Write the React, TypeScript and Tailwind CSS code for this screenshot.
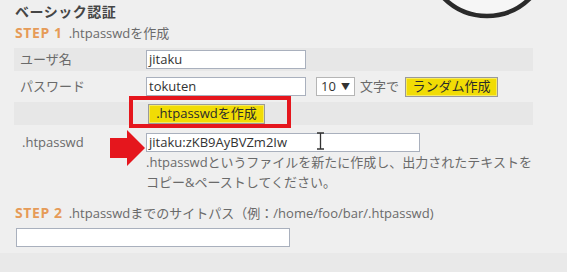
import React from 'react';

const font = { fontFamily: '"Open Sans", "Noto Sans CJK JP", sans-serif' };

const Field: React.FC<{ value?: string; className?: string }> = ({ value, className }) => (
  <div
    className={`h-[19px] bg-white border border-[#a9b0bd] px-[2px] text-[13px] leading-[17px] text-[#333] whitespace-nowrap overflow-hidden ${className ?? ''}`}
  >
    {value}
  </div>
);

const YellowButton: React.FC<{ label: string; className?: string }> = ({ label, className }) => (
  <div
    className={`h-[20px] flex items-center justify-center bg-[#f1dc05] border border-[#9a9a9a] shadow-[inset_0_0_0_1px_#f7ea60] text-[13px] text-[#2b2b2b] leading-none whitespace-nowrap ${className ?? ''}`}
  >
    {label}
  </div>
);

export default function App() {
  return (
    <div className="relative w-[567px] h-[272px] overflow-hidden bg-[#efefef] text-[#6a6a6a]" style={font}>
      <div className="flex flex-col h-full">
        <div className="mt-[3px] pl-[15px] text-[14px] leading-[18px] font-bold text-[#454545] tracking-[0.5px]">ベーシック認証</div>

        <div className="mt-[3px] pl-[15px] text-[13px] leading-[18px] flex gap-[6px]">
          <span className="font-bold text-[14px] tracking-[0.6px] text-[#e69b58]">STEP 1</span>
          <span>.htpasswdを作成</span>
        </div>

        <div className="mt-[6px] ml-[14px] w-[519px] flex flex-col gap-[4px]">
          <div className="h-[23px] flex items-center bg-[#e7e7e7]">
            <div className="w-[132px] pl-[6px] text-[13px]">ユーザ名</div>
            <Field value="jitaku" className="w-[160px]" />
          </div>

          <div className="h-[23px] flex items-center">
            <div className="w-[132px] pl-[6px] text-[13px]">パスワード</div>
            <Field value="tokuten" className="w-[160px]" />
            <div className="ml-[10px] w-[39px] h-[19px] bg-white border border-[#b5b5b5] flex items-center justify-between px-[4px] text-[13px] text-[#333]">
              <span>10</span>
              <span className="text-[9px]">▼</span>
            </div>
            <span className="ml-[5px] text-[13px]">文字で</span>
            <YellowButton label="ランダム作成" className="ml-[6px] w-[93px]" />
          </div>

          <div className="h-[23px] flex items-center bg-[#e7e7e7]">
            <div className="w-[134px]" />
            <YellowButton label=".htpasswdを作成" className="w-[117px]" />
          </div>

          <div className="flex">
            <div className="w-[132px] pl-[8px] pt-[4px] text-[13px] leading-[19px]">.htpasswd</div>
            <div className="pt-[4px]">
              <Field value="jitaku:zKB9AyBVZm2Iw" className="w-[274px]" />
              <div className="text-[13px] leading-[20px]">
                <div>.htpasswdというファイルを新たに作成し、出力されたテキストを</div>
                <div>コピー&amp;ペーストしてください。</div>
              </div>
            </div>
          </div>
        </div>

        <div className="mt-[12px] pl-[15px] text-[13px] leading-[18px] flex gap-[6px]">
          <span className="font-bold text-[14px] tracking-[0.6px] text-[#e69b58]">STEP 2</span>
          <span>.htpasswdまでのサイトパス（例：/home/foo/bar/.htpasswd)</span>
        </div>

        <div className="mt-[6px] pl-[16px]">
          <Field className="w-[274px]" />
        </div>

        <div className="mt-[6px] flex-1 bg-[#e9e9e9]" />
      </div>

      {/* highlight box */}
      <div className="absolute left-[129px] top-[96px] w-[162px] h-[32px] border-[4px] border-[#e5161d]" />

      {/* red arrow */}
      <svg className="absolute left-[110px] top-[130px]" width="36" height="37" viewBox="0 0 36 37">
        <polygon points="0,8 17,8 17,0 35,18 17,36 17,28 0,28" fill="#e5161d" />
      </svg>

      {/* text cursor */}
      <svg className="absolute left-[316px] top-[132px]" width="9" height="18" viewBox="0 0 9 18">
        <path d="M1 1h7M4.5 1v16M1 17h7" stroke="#333" strokeWidth="1.3" fill="none" />
      </svg>

      {/* circle */}
      <svg className="absolute left-[420px] top-[-115px]" width="140" height="140" viewBox="0 0 140 140">
        <circle cx="67" cy="70" r="61" stroke="#2a2a2a" strokeWidth="4.5" fill="#f6f6f6" />
      </svg>
    </div>
  );
}
